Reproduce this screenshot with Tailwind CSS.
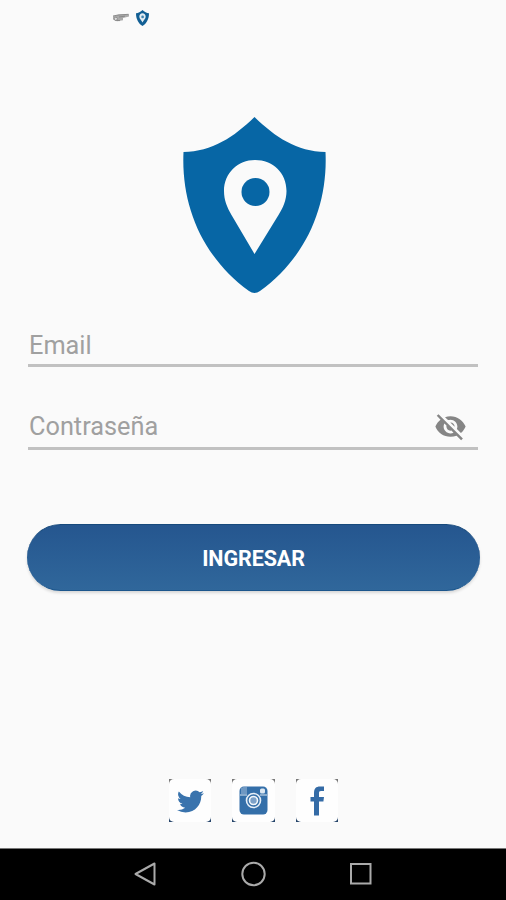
<!DOCTYPE html>
<html lang="es">
<head>
<meta charset="utf-8">
<title>Ingresar</title>
<script src="https://cdn.jsdelivr.net/npm/@tailwindcss/browser@4"></script>
</head>
<body class="bg-[#fafafa]">
<div class="flex h-[900px] w-[506px] flex-col overflow-hidden bg-[#fafafa] font-['Roboto',sans-serif]">
  <header class="flex h-9 shrink-0 items-center gap-1.5 pl-[112px]">
    <svg class="h-3 w-[18px]" viewBox="0 0 18 12">
      <path d="M1 4.2L7 2.6L17 2.3V4.6L11 6V8.2L5 9.2L1 7.5Z" fill="#aaa"/>
      <path d="M1 4L6 3L16.5 2.3M7 5L13 4.2M3 8.5L8 8.6" fill="none" stroke="#858585" stroke-width=".9"/>
      <circle cx="3.8" cy="6.8" r="1.6" fill="#ddd" stroke="#858585" stroke-width=".8"/>
    </svg>
    <svg class="h-4 w-[13px]" viewBox="0 0 142 176">
      <path d="M71 0C92 20 117 34 142 35C145 92 116 149 71 176C26 149 -3 92 0 35C25 34 50 20 71 0Z" fill="#125f94"/>
      <path d="M71 137C61 113 36 98 36 75C36 53 51 37 71 37C91 37 106 53 106 75C106 98 81 113 71 137Z" fill="#e3edf4"/>
      <circle cx="72" cy="76" r="15" fill="#4285ae"/>
    </svg>
  </header>

  <main class="flex flex-1 flex-col px-7">
    <svg class="mt-[81px] ml-[155px] h-[176px] w-[143px] shrink-0" viewBox="0 0 143 176">
      <path d="M71.5 0C92 20 114 34.500 142.500 35C145 88 124 140 77 174Q71.500 178 66 174C19 140 -2 88 .500 35C29 34.500 51 20 71.500 0Z" fill="#0766a5"/>
      <path d="M71.500 137L48.500 98C44 90 41 83 41 74C41 56 55 43 72 43C90 43 103.500 56 103.500 74C103.500 83 100 91 95.500 98Z" fill="#fafafa"/>
      <circle cx="72.500" cy="75" r="14" fill="#0766a5"/>
    </svg>

    <form class="flex flex-col">
      <label class="mt-[31px] flex h-[43px] items-center border-b-[3px] border-[#c1c1c1] pt-[3px] pl-px text-[25.300px] leading-none text-[#a0a0a0]">Email</label>
      <label class="mt-10 flex h-[43px] items-center justify-between border-b-[3px] border-[#c1c1c1] pr-[11px] pl-px text-[25.300px] leading-none text-[#a0a0a0]">
        <span>Contraseña</span>
        <svg class="mb-px h-[33px] w-[33px]" viewBox="0 0 24 24" fill="#858585">
          <path d="M12 7c2.760 0 5 2.240 5 5 0 .65-.13 1.260-.36 1.830l2.920 2.920c1.510-1.260 2.700-2.890 3.430-4.750-1.730-4.390-6-7.500-11-7.500-1.400 0-2.740.25-3.980.7l2.160 2.160C10.740 7.130 11.350 7 12 7zM2 4.270l2.280 2.280.46.46C3.080 8.300 1.780 10.020 1 12c1.730 4.390 6 7.500 11 7.500 1.550 0 3.030-.3 4.380-.84l.42.42L19.730 22 21 20.730 3.270 3 2 4.270zM7.530 9.800l1.550 1.550c-.05.21-.08.43-.08.65 0 1.660 1.340 3 3 3 .22 0 .44-.03.65-.08l1.550 1.550c-.67.33-1.410.53-2.200.53-2.760 0-5-2.240-5-5 0-.79.2-1.530.53-2.200zm4.310-.78l3.150 3.150.02-.16c0-1.660-1.340-3-3-3l-.17.01z"/>
        </svg>
      </label>
      <button type="button" class="-mr-[2px] -ml-px mt-[74px] flex h-[67px] items-center justify-center rounded-full border-y border-t-[#174a7c] border-b-[#1c568c] bg-linear-to-b from-[#25568f] to-[#30679b] pt-[3px] text-[21.500px] font-bold tracking-[-0.100px] text-white shadow-[0_2px_3px_rgba(0,0,0,0.14)]">INGRESAR</button>
    </form>

    <nav class="mt-auto mb-[26px] flex justify-center gap-[21px]">
      <a class="flex h-[43px] w-[42px] bg-[linear-gradient(180deg,#777_50%,#26456a_50%)]">
        <span class="flex h-full w-full items-center justify-center rounded-[5px] bg-[#fefefe] pt-px pl-px">
        <svg class="h-[27px] w-[27px]" viewBox="0 0 24 24" fill="#3973ad"><path d="M23.950 4.570a10 10 0 0 1-2.820.77 4.960 4.960 0 0 0 2.160-2.720c-.95.55-2 .95-3.130 1.180a4.920 4.920 0 0 0-8.380 4.480A13.900 13.900 0 0 1 1.640 3.160a4.920 4.920 0 0 0 1.520 6.570 4.900 4.900 0 0 1-2.230-.61v.06a4.920 4.920 0 0 0 3.950 4.830 5 5 0 0 1-2.210.08 4.940 4.940 0 0 0 4.600 3.420A9.870 9.870 0 0 1 0 19.540a14 14 0 0 0 7.550 2.210c9.050 0 14-7.500 14-13.980 0-.21 0-.42-.02-.63a9.900 9.900 0 0 0 2.420-2.570z"/></svg>
        </span>
      </a>
      <a class="flex h-[43px] w-[43px] bg-[linear-gradient(180deg,#777_50%,#26456a_50%)]">
        <span class="flex h-full w-full items-center justify-center rounded-[5px] bg-[#fefefe]">
        <svg class="h-[29px] w-[29px]" viewBox="0 0 29 29">
          <rect x=".5" y=".5" width="28" height="28" rx="4.500" fill="#346fa9"/>
          <path d="M3 1.500V8M5 1V8M7 1V8" stroke="#a9c2dc" stroke-width="1"/>
          <path d="M1 9H8M21 9H28" stroke="#d9e5f0" stroke-width="1.200"/>
          <rect x="21" y="2.500" width="5" height="5" rx="1.500" fill="#dce7f1"/>
          <circle cx="14.500" cy="14.500" r="7" fill="#346fa9" stroke="#e7eff7" stroke-width="1.600"/>
          <circle cx="14.500" cy="14.500" r="4" fill="#7ca1c8" stroke="#f1f6fa" stroke-width="1.600"/>
        </svg>
        </span>
      </a>
      <a class="flex h-[43px] w-[42px] bg-[linear-gradient(180deg,#777_50%,#26456a_50%)]">
        <span class="flex h-full w-full items-center justify-center rounded-[5px] bg-[#fefefe]">
        <svg class="h-[30px] w-4" viewBox="0 0 16 30"><path d="M5 29.500V15.500H1.500V11H5V7C5 2.500 7 .5 11 .5H15V5H12C10.400 5 10 5.800 10 7.200V11H15L14.400 15.500H10V29.500Z" fill="#346ba6"/></svg>
        </span>
      </a>
    </nav>
  </main>

  <footer class="flex h-[52px] shrink-0 items-center justify-between border-t border-[#777] bg-black pr-[133px] pb-[2px] pl-[133px]">
    <svg class="h-[26px] w-[24px]" viewBox="0 0 24 26" fill="none" stroke="#aaa" stroke-width="2"><path d="M21.500 2.500V23.500L2.500 13Z" stroke-linejoin="round"/></svg>
    <svg class="h-[26px] w-[26px]" viewBox="0 0 26 26" fill="none" stroke="#aaa" stroke-width="2"><circle cx="13.500" cy="13" r="11.200"/></svg>
    <svg class="h-[26px] w-[24px]" viewBox="0 0 24 26" fill="none" stroke="#aaa" stroke-width="2"><rect x="2" y="3" width="19.500" height="19.500"/></svg>
  </footer>
</div>
</body>
</html>
